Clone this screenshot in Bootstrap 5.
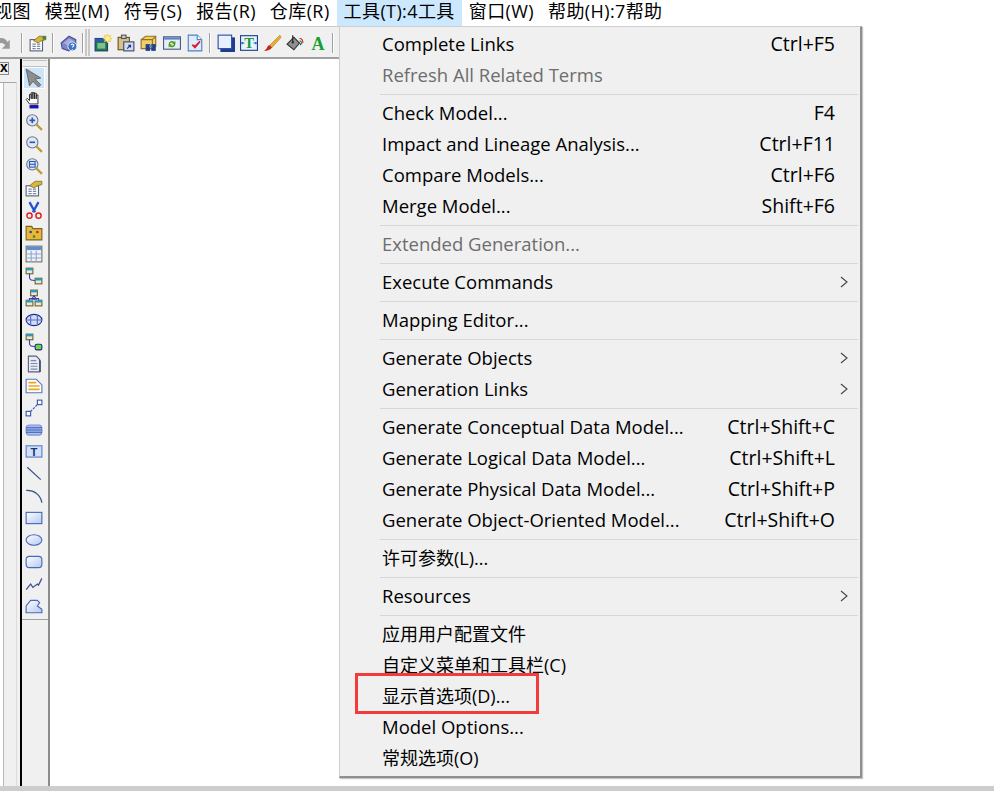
<!DOCTYPE html>
<html lang="zh">
<head>
<meta charset="utf-8">
<title>PowerDesigner 工具菜单</title>
<link href="https://cdn.jsdelivr.net/npm/bootstrap@5.3.0/dist/css/bootstrap.min.css" rel="stylesheet">
<style>
html,body{height:791px;overflow:hidden;background:#fff}
body{font-family:"Open Sans","Noto Sans CJK SC",sans-serif;font-size:18px;color:#000;position:relative}
.frame{height:791px}
.menubar{height:27px;width:600px;margin-left:-13px;border-bottom:1px solid #ccc;font-size:18px;line-height:22px;letter-spacing:.4px;background:#fff}
.menubar span{padding:0 7px;display:block;height:26px;white-space:nowrap}
.menubar span.on{background:#cce8ff}
.toolstrip{height:32px;width:600px;background:#f0f0f0;border-bottom:2px solid #a0a0a0;margin-left:-9px;padding-top:1px}
.tbtn{width:23px;height:29px;flex:none;display:flex;align-items:center;justify-content:center}
.tbtn svg,.vbtn svg{width:18px;height:18px;display:block;overflow:visible}
.tsep{width:2px;height:20px;flex:none;background:#a0a0a0;border-right:1px solid #fff;margin:0 3px}
.tsep.wide{margin-left:7px}
.tsep.tight{margin:0 1px 0 2px}
.tgrip{width:5px;height:27px;flex:none;border-left:2px solid #c8c8c8;border-right:2px solid #c8c8c8;margin-right:1px}
.workarea{min-height:0}
.sidepane{width:20px;background:#f0f0f0;position:relative;flex:none}
.closex{width:9px;height:13px;margin:3px 0 0 0;border:1px solid #8a8a8a;border-left:0;background:#eee;font:bold 14px/9px "Liberation Sans",sans-serif;text-align:right;padding-right:1px}
.sideinner{margin-top:7px;height:calc(100% - 23px);width:17px;border-top:1px solid #a8a8a8;border-right:1px solid #dcdcdc;background:linear-gradient(90deg,#fff 0 3px,#b8b8b8 3px 4px,#f0f0f0 4px)}
.vtools{width:30px;flex:none;background:#f0f0f0;border-left:2px solid #000;border-right:2px solid #8c8c8c}
.vgrip{height:7px;margin:1px 1px 0;border-top:1px solid #c0c0c0;border-bottom:1px solid #c0c0c0}
.vbtn{height:22px;display:flex;align-items:center;justify-content:center;padding-right:2px}
.vbtn.sel{background:#cce4f7;border:1px solid #fff;margin:0 3px 0 1px;padding-right:0}
.vend{border-top:1px solid #a0a0a0;margin-top:2px}
.canvasarea{background:#fff}
.bottomstrip{height:5px;background:#cdcdcd;flex:none}
.appmenu.dropdown-menu{position:absolute;left:339px;top:26px;width:523px;height:752px;margin:0;padding:2px 1px 0;border:1px solid #cfcfcf;border-right:2px solid #8f8f8f;border-bottom:2px solid #8f8f8f;border-radius:0;background:#f0f0f0;box-shadow:1px 1px 1px #c4c4c4;display:block;color:#000}
.appmenu .dropdown-item{height:31px;line-height:28px;padding:0 24px 2px 41px;display:flex;justify-content:space-between;align-items:center;color:#000;white-space:nowrap;background:transparent;font-size:18.5px}
.appmenu .dropdown-item.muted{color:#6d6d6d}
.appmenu .dropdown-item.cjk{font-size:18px}
.appmenu .hotkey{font-size:19.5px}
.appmenu .dropdown-divider{margin:3px 1px 3px 39px;border-top:1px solid #d7d7d7;opacity:1;height:1px}
.chev{width:8px;height:12px;margin-right:-13px;flex:none}
.redmark{position:absolute;left:355px;top:673px;width:184px;height:41px;border:3px solid #f33b3b;pointer-events:none;z-index:1001}
.glyph{font-family:"Liberation Serif",serif;font-weight:bold}
</style>
</head>
<body>
<div class="frame d-flex flex-column">
  <div class="menubar d-flex">
    <span>视图</span><span>模型(M)</span><span>符号(S)</span><span>报告(R)</span><span>仓库(R)</span><span class="on">工具(T):4工具</span><span>窗口(W)</span><span>帮助(H):7帮助</span>
  </div>
  <div class="toolstrip d-flex align-items-center">
    <div class="tbtn"><svg viewBox="0 0 16 16"><path d="M1 6c4-4 9-3 11 1l2-2v8H7l3-3c-1-2-4-3-6-1z" fill="#9a9a9a"/></svg></div>
    <div class="tsep wide"></div>
    <div class="tbtn"><svg viewBox="0 0 16 16"><rect x="1" y="5" width="11" height="10" fill="#fff" stroke="#56617a"/><path d="M3 9h3M3 11h3M3 13h3M7 9h3M7 11h3M7 13h3" stroke="#7c88a8"/><path d="M4 6l5-4h6v3l-4 1-3 2z" fill="#d9b53c" stroke="#6b5a18" stroke-width=".6"/><path d="M12 2h3v3h-3z" fill="#3c8a3c"/></svg></div>
    <div class="tsep"></div>
    <div class="tbtn"><svg viewBox="0 0 16 16"><path d="M1 8l7-6 6 3v4l-6 6-6-2z" fill="#7f86c6" stroke="#4a4f96"/><path d="M3 8l5-4 4 2-5 4z" fill="#a8ade0"/><circle cx="11" cy="11" r="4" fill="#3a72c4" stroke="#fff" stroke-width=".7"/><path d="M9.7 10c.3-1.500 2.700-1.300 2.600.1 0 1-1.300 1-1.300 2M11 13.400v.6" stroke="#fff" fill="none"/></svg></div>
    <div class="tsep tight"></div>
    <div class="tgrip"></div>
    <div class="tbtn"><svg viewBox="0 0 16 16"><rect x="1" y="4" width="11" height="11" fill="#1f7a4a" stroke="#1c3c78"/><path d="M1 4h11v3H1z" fill="#2c5aa8"/><rect x="3" y="8" width="7" height="5" fill="#7cc08f"/><path d="M12 0l1 2 2-1-1 2 2 1-2 1 1 2-2-1-1 2-1-2-2 1 1-2-2-1 2-1-1-2 2 1z" fill="#fff08a" stroke="#e0b838" stroke-width=".5"/></svg></div>
    <div class="tbtn"><svg viewBox="0 0 16 16"><rect x="1" y="3" width="10" height="11" fill="#d8c08a" stroke="#6a5220"/><rect x="4" y="1" width="4" height="3" fill="#c9c9c9" stroke="#555"/><rect x="6" y="7" width="9" height="8" fill="#d6dbe8" stroke="#3c4a78"/><path d="M9 13l3-3M10 10h2v2" stroke="#1c2f88" fill="none"/></svg></div>
    <div class="tbtn"><svg viewBox="0 0 16 16"><path d="M1 5l4-3h9v9l-3 2H1z" fill="#f3cf66" stroke="#8f7428"/><path d="M1 5h10v8M11 5l3-3" stroke="#8f7428" fill="none"/><rect x="5" y="9" width="4" height="6" fill="#1f3f8a"/><rect x="10" y="9" width="4" height="6" fill="#1f3f8a"/><rect x="8" y="10" width="3" height="2" fill="#5f78b8"/></svg></div>
    <div class="tbtn"><svg viewBox="0 0 16 16"><rect x=".5" y="2.500" width="15" height="11" fill="#e6eefa" stroke="#49597f"/><path d="M1 3h14v2H1z" fill="#5c84c8"/><path d="M5 9a3 3 0 0 1 5-2l1-1v3H8l1-1a2 2 0 0 0-3 1zM11 9a3 3 0 0 1-5 2l-1 1V9h3l-1 1a2 2 0 0 0 3-1z" fill="#4f9a1a"/></svg></div>
    <div class="tbtn"><svg viewBox="0 0 16 16"><path d="M2 1h8l4 4v10H2z" fill="#dfeafa" stroke="#4b82c8"/><path d="M10 1v4h4" fill="#fff" stroke="#4b82c8"/><path d="M5 10l3 3 5-6-1-1-4 4-2-1z" fill="#d81e2c"/></svg></div>
    <div class="tsep"></div>
    <div class="tbtn"><svg viewBox="0 0 16 16"><rect x="3" y="3" width="13" height="13" fill="#1f3f8a"/><rect x="1" y="1" width="12" height="12" fill="#e8f0ff" stroke="#2a4ea8"/></svg></div>
    <div class="tbtn"><svg viewBox="0 0 16 16"><rect x=".5" y="1.500" width="15" height="13" fill="#e9f2ff" stroke="#1f3f8a"/><text x="8" y="12.500" text-anchor="middle" class="glyph" font-size="13" fill="#169a3a">T</text><path d="M1 8h3M15 8h-3M2 7v2M14 7v2" stroke="#1f5fc8"/></svg></div>
    <div class="tbtn"><svg viewBox="0 0 16 16"><path d="M15 1L6 10l2 2 8-9z" fill="#e8b030" stroke="#a87818" stroke-width=".5"/><path d="M6 10c-2 0-2 2-3 3l-2 2c3 0 6-1 7-3z" fill="#c8281c"/></svg></div>
    <div class="tbtn"><svg viewBox="0 0 16 16"><path d="M1 9l6-6 5 5-5 6z" fill="#8f8f8f" stroke="#333"/><path d="M6 1v6" stroke="#222"/><circle cx="6" cy="7.500" r="1" fill="#222"/><path d="M12 4c2 0 3 2 3 4" stroke="#e02020" fill="none"/><path d="M12 6c1 0 2 1 2 3" stroke="#20a020" fill="none"/><path d="M12 8c.7 0 1 1 1 2" stroke="#2040e0" fill="none"/></svg></div>
    <div class="tbtn"><svg viewBox="0 0 16 16"><text x="8" y="14" text-anchor="middle" class="glyph" font-size="16" fill="#16a030">A</text></svg></div>
    <div class="tsep"></div>
  </div>
  <div class="workarea d-flex flex-grow-1">
    <div class="sidepane">
      <div class="closex">x</div>
      <div class="sideinner"></div>
    </div>
    <div class="vtools">
      <div class="vgrip"></div>
      <div class="vbtn sel"><svg viewBox="0 0 16 16"><path d="M1 0l13 8-5 1 5 5-2 2-5-5-3 4z" fill="#8d8d8d" stroke="#555" stroke-width=".7"/></svg></div>
      <div class="vbtn"><svg viewBox="0 0 16 16"><path d="M4 11.500L1 7.500l1-1 2 2V3h1.500v4V1.500H7V7V1.500h1.500V7V2H10v5V3.500h1.500V11.500z" fill="#fff" stroke="#222" stroke-width=".8"/><rect x="4" y="12.500" width="8" height="3" fill="#1414b4"/></svg></div>
      <div class="vbtn"><svg viewBox="0 0 16 16"><circle cx="6.500" cy="6.500" r="5" fill="#dfe8f5" stroke="#6a7a94"/><path d="M4 6.500h5M6.500 4v5" stroke="#3058b0" stroke-width="1.500"/><path d="M10 10l5 5" stroke="#c09a30" stroke-width="2"/></svg></div>
      <div class="vbtn"><svg viewBox="0 0 16 16"><circle cx="6.500" cy="6.500" r="5" fill="#dfe8f5" stroke="#6a7a94"/><path d="M4 6.500h5" stroke="#3058b0" stroke-width="1.500"/><path d="M10 10l5 5" stroke="#c09a30" stroke-width="2"/></svg></div>
      <div class="vbtn"><svg viewBox="0 0 16 16"><circle cx="6.500" cy="6.500" r="5" fill="#dfe8f5" stroke="#6a7a94"/><rect x="4" y="4" width="5" height="5" fill="none" stroke="#3058b0"/><path d="M4 6.500h5" stroke="#3058b0"/><path d="M10 10l5 5" stroke="#c09a30" stroke-width="2"/></svg></div>
      <div class="vbtn"><svg viewBox="0 0 16 16"><rect x="1" y="6" width="11" height="9" fill="#fff" stroke="#56617a"/><path d="M3 9h3M3 11h3M3 13h3M7 9h3M7 11h3M7 13h3" stroke="#7c88a8"/><path d="M4 6l5-4h6v3l-4 1-3 2z" fill="#d9b53c" stroke="#6b5a18" stroke-width=".6"/></svg></div>
      <div class="vbtn"><svg viewBox="0 0 16 16"><path d="M4 1l5 9M12 1l-5 9" stroke="#2050d0" stroke-width="2"/><circle cx="4" cy="13" r="2.300" fill="none" stroke="#e02020" stroke-width="1.300"/><circle cx="12" cy="13" r="2.300" fill="none" stroke="#e02020" stroke-width="1.300"/></svg></div>
      <div class="vbtn"><svg viewBox="0 0 16 16"><path d="M1 3h5l1 2h8v10H1z" fill="#e8b838" stroke="#7a6420"/><rect x="4" y="7" width="2" height="2" fill="#2040b0"/><rect x="10" y="7" width="2" height="2" fill="#c02020"/><rect x="7" y="11" width="2" height="2" fill="#209040"/></svg></div>
      <div class="vbtn"><svg viewBox="0 0 16 16"><rect x="1" y="1" width="14" height="14" fill="#eef3fb" stroke="#7a7358"/><path d="M1 1.500h14v3H1z" fill="#5f8ed0"/><path d="M1 8h14M1 11.500h14M5.500 5v10M10 5v10" stroke="#8fa8d0"/></svg></div>
      <div class="vbtn"><svg viewBox="0 0 16 16"><rect x="1" y="1" width="6" height="5" fill="#efe8cf" stroke="#6e6434"/><path d="M1 1h6v2H1z" fill="#2a9ab8"/><rect x="9" y="10" width="6" height="5" fill="#efe8cf" stroke="#6e6434"/><path d="M9 10h6v2H9z" fill="#2a9ab8"/><path d="M4 6v3c0 3 2 3 5 3" fill="none" stroke="#3c3ca0"/></svg></div>
      <div class="vbtn"><svg viewBox="0 0 16 16"><rect x="5" y="1" width="6" height="5" fill="#efe8cf" stroke="#6e6434"/><path d="M5 1h6v2H5z" fill="#2a9ab8"/><rect x="1" y="10" width="6" height="5" fill="#efe8cf" stroke="#6e6434"/><rect x="9" y="10" width="6" height="5" fill="#efe8cf" stroke="#6e6434"/><path d="M1 10h6v2H1zM9 10h6v2H9z" fill="#2a9ab8"/><path d="M8 6l-2 3h4zM4 10V8.500h8V10" fill="#fff" stroke="#3c3ca0"/></svg></div>
      <div class="vbtn"><svg viewBox="0 0 16 16"><ellipse cx="8" cy="8" rx="7" ry="5" fill="#cfdcf6" stroke="#1c2c90"/><path d="M1 8h14M5 3.500v9M11 3.500v9" stroke="#5a6cc0"/></svg></div>
      <div class="vbtn"><svg viewBox="0 0 16 16"><rect x="1" y="1" width="6" height="5" fill="#efe8cf" stroke="#6e6434"/><path d="M1 1h6v2H1z" fill="#2a9ab8"/><rect x="9" y="10" width="6" height="5" rx="1.500" fill="#6ed838" stroke="#1c2c90"/><path d="M4 6v3c0 3 2 3 5 3" fill="none" stroke="#3c3ca0"/></svg></div>
      <div class="vbtn"><svg viewBox="0 0 16 16"><path d="M3 1h7l3 3v11H3z" fill="#e8ebf2" stroke="#55617f"/><path d="M13 4v11h1V5z" fill="#2c3a5c"/><path d="M5 5h5M5 7.500h6M5 10h6M5 12.500h6" stroke="#7f8aa8"/></svg></div>
      <div class="vbtn"><svg viewBox="0 0 16 16"><path d="M1 2h9l5 5v7H1z" fill="#fff" stroke="#5b74c0"/><path d="M3 5h7M3 8h10M3 11h10" stroke="#e8a820" stroke-width="1.500"/></svg></div>
      <div class="vbtn"><svg viewBox="0 0 16 16"><rect x="1" y="11" width="4" height="4" fill="#fff" stroke="#3c54b0"/><rect x="11" y="1" width="4" height="4" fill="#fff" stroke="#3c54b0"/><path d="M5 11l6-6" stroke="#3c54b0" stroke-dasharray="2 1"/></svg></div>
      <div class="vbtn"><svg viewBox="0 0 16 16"><rect x="1" y="3.500" width="14" height="9" rx="3" fill="#a8bef0" stroke="#7e92c8"/><path d="M1 6h14M1 8h14M1 10h14" stroke="#3858b8"/></svg></div>
      <div class="vbtn"><svg viewBox="0 0 16 16"><rect x="1" y="2.500" width="14" height="10" fill="#d3e0fa" stroke="#5a7cc8"/><text x="8" y="11.500" text-anchor="middle" font-weight="bold" font-size="10" fill="#14347c" font-family="Liberation Sans">T</text></svg></div>
      <div class="vbtn"><svg viewBox="0 0 16 16"><path d="M2 2l12 11" stroke="#3c548c" stroke-width="1.100"/></svg></div>
      <div class="vbtn"><svg viewBox="0 0 16 16"><path d="M1 3c7-.5 13 4 14 11" fill="none" stroke="#3c548c" stroke-width="1.100"/></svg></div>
      <div class="vbtn"><svg viewBox="0 0 16 16"><defs><linearGradient id="fillblue" x1="0" y1="0" x2="1" y2="1"><stop offset="0" stop-color="#fff"/><stop offset="1" stop-color="#b4c8f0"/></linearGradient></defs><rect x="1" y="3" width="14" height="10" fill="url(#fillblue)" stroke="#4a68b8"/></svg></div>
      <div class="vbtn"><svg viewBox="0 0 16 16"><ellipse cx="8" cy="8" rx="7" ry="4.700" fill="url(#fillblue)" stroke="#4a68b8"/></svg></div>
      <div class="vbtn"><svg viewBox="0 0 16 16"><rect x="1" y="3" width="14" height="10" rx="3" fill="url(#fillblue)" stroke="#4a68b8"/></svg></div>
      <div class="vbtn"><svg viewBox="0 0 16 16"><path d="M1 13l4-5 2 3 4-3 1 1 3-6" fill="none" stroke="#3c548c" stroke-width="1.100"/></svg></div>
      <div class="vbtn"><svg viewBox="0 0 16 16"><path d="M1 14V8l4-5h6l2 2-2 3 4 3v3z" fill="url(#fillblue)" stroke="#4a68b8"/></svg></div>
      <div class="vend"></div>
    </div>
    <div class="canvasarea flex-grow-1"></div>
  </div>
  <div class="bottomstrip"></div>
</div>

<div class="dropdown-menu show appmenu">
  <a class="dropdown-item"><span>Complete Links</span><span class="hotkey">Ctrl+F5</span></a>
  <a class="dropdown-item muted"><span>Refresh All Related Terms</span></a>
  <div class="dropdown-divider"></div>
  <a class="dropdown-item"><span>Check Model...</span><span class="hotkey">F4</span></a>
  <a class="dropdown-item"><span>Impact and Lineage Analysis...</span><span class="hotkey">Ctrl+F11</span></a>
  <a class="dropdown-item"><span>Compare Models...</span><span class="hotkey">Ctrl+F6</span></a>
  <a class="dropdown-item"><span>Merge Model...</span><span class="hotkey">Shift+F6</span></a>
  <div class="dropdown-divider"></div>
  <a class="dropdown-item muted"><span>Extended Generation...</span></a>
  <div class="dropdown-divider"></div>
  <a class="dropdown-item"><span>Execute Commands</span><svg class="chev" viewBox="0 0 8 12"><path d="M1 1l6 5-6 5" fill="none" stroke="#444" stroke-width="1.100"/></svg></a>
  <div class="dropdown-divider"></div>
  <a class="dropdown-item"><span>Mapping Editor...</span></a>
  <div class="dropdown-divider"></div>
  <a class="dropdown-item"><span>Generate Objects</span><svg class="chev" viewBox="0 0 8 12"><path d="M1 1l6 5-6 5" fill="none" stroke="#444" stroke-width="1.100"/></svg></a>
  <a class="dropdown-item"><span>Generation Links</span><svg class="chev" viewBox="0 0 8 12"><path d="M1 1l6 5-6 5" fill="none" stroke="#444" stroke-width="1.100"/></svg></a>
  <div class="dropdown-divider"></div>
  <a class="dropdown-item"><span>Generate Conceptual Data Model...</span><span class="hotkey">Ctrl+Shift+C</span></a>
  <a class="dropdown-item"><span>Generate Logical Data Model...</span><span class="hotkey">Ctrl+Shift+L</span></a>
  <a class="dropdown-item"><span>Generate Physical Data Model...</span><span class="hotkey">Ctrl+Shift+P</span></a>
  <a class="dropdown-item"><span>Generate Object-Oriented Model...</span><span class="hotkey">Ctrl+Shift+O</span></a>
  <div class="dropdown-divider"></div>
  <a class="dropdown-item cjk"><span>许可参数(L)...</span></a>
  <div class="dropdown-divider"></div>
  <a class="dropdown-item"><span>Resources</span><svg class="chev" viewBox="0 0 8 12"><path d="M1 1l6 5-6 5" fill="none" stroke="#444" stroke-width="1.100"/></svg></a>
  <div class="dropdown-divider"></div>
  <a class="dropdown-item cjk"><span>应用用户配置文件</span></a>
  <a class="dropdown-item cjk"><span>自定义菜单和工具栏(C)</span></a>
  <a class="dropdown-item cjk"><span>显示首选项(D)...</span></a>
  <a class="dropdown-item"><span>Model Options...</span></a>
  <a class="dropdown-item cjk"><span>常规选项(O)</span></a>
</div>
<div class="redmark"></div>
<script src="https://cdn.jsdelivr.net/npm/bootstrap@5.3.0/dist/js/bootstrap.bundle.min.js"></script>
</body>
</html>
